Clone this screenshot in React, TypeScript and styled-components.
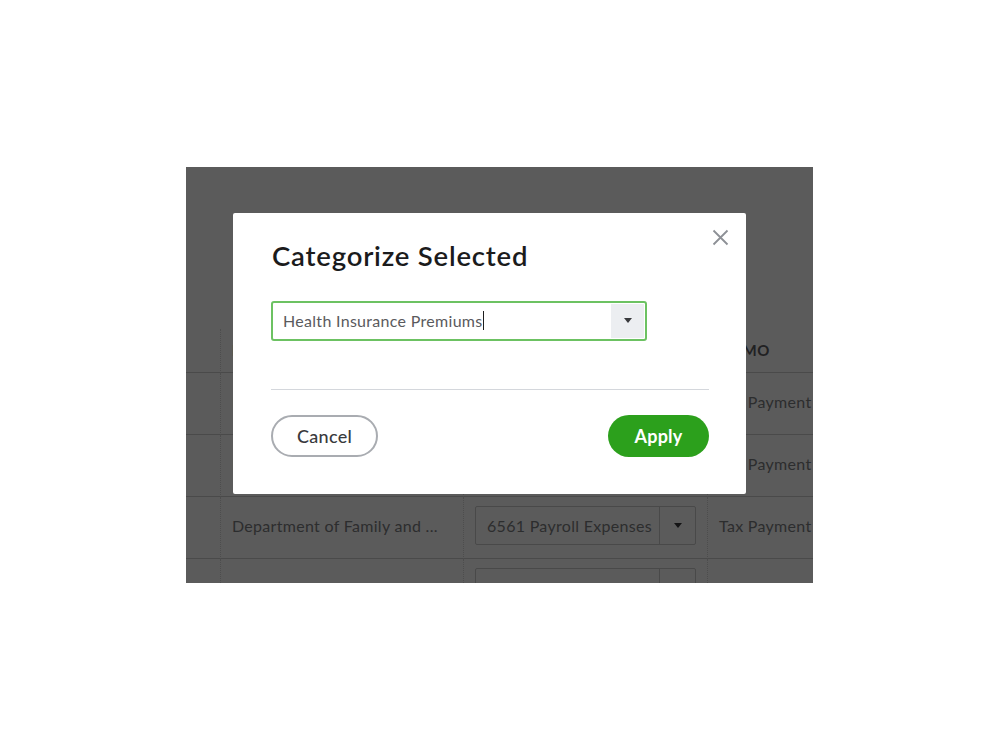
import React from "react";
import styled, { createGlobalStyle } from "styled-components";

const GlobalStyle = createGlobalStyle`
  html, body {
    margin: 0;
    padding: 0;
    background: #ffffff;
  }
  body {
    font-family: Lato, "Open Sans", Arial, sans-serif;
    color: #393a3d;
  }
  * {
    box-sizing: border-box;
  }
`;

const Page = styled.div`
  width: 100vw;
  height: 100vh;
  display: flex;
  align-items: center;
  justify-content: center;
`;

const Shot = styled.div`
  position: relative;
  width: 627px;
  height: 416px;
  overflow: hidden;
  background: #ffffff;
`;

const Table = styled.div`
  padding-top: 162px;
  display: grid;
  grid-template-columns: 35px 243px 244px 1fr;
`;

const HeadCell = styled.div<{ $first?: boolean }>`
  height: 44px;
  display: flex;
  align-items: center;
  padding: 0 11px;
  font-size: 15px;
  font-weight: 700;
  letter-spacing: 0.4px;
  color: #5e5e62;
  text-transform: uppercase;
  border-right: ${(p) => (p.$first ? "1px dotted #d9d9d9" : "none")};
  border-bottom: 1px solid #cfcfcf;
`;

const Cell = styled.div<{ $divider?: boolean }>`
  height: 62px;
  display: flex;
  align-items: center;
  padding: 0 11px 3px;
  font-size: 16px;
  letter-spacing: 0.3px;
  color: #7d7e82;
  white-space: nowrap;
  border-right: ${(p) => (p.$divider ? "1px dotted #d9d9d9" : "none")};
  border-bottom: 1px solid #cfcfcf;
`;

const RowSelect = styled.div`
  width: 222px;
  height: 39px;
  display: flex;
  border: 1px solid #cccccc;
  border-radius: 2px;
  background: #ffffff;
`;

const RowSelectText = styled.div`
  flex: 1;
  padding-left: 11px;
  display: flex;
  align-items: center;
  white-space: nowrap;
  font-size: 16px;
  letter-spacing: 0.3px;
  color: #7d7e82;
`;

const RowSelectArrow = styled.div`
  width: 36px;
  border-left: 1px solid #cccccc;
  display: flex;
  align-items: center;
  justify-content: center;
`;

const Triangle = styled.span`
  width: 0;
  height: 0;
  border-left: 4.5px solid transparent;
  border-right: 4.5px solid transparent;
  border-top: 5px solid #393a3d;
`;

const Overlay = styled.div`
  position: absolute;
  inset: 0;
  background: rgba(0, 0, 0, 0.643);
  display: flex;
  align-items: flex-start;
  padding: 46px 0 0 47px;
`;

const Modal = styled.div`
  width: 513px;
  height: 281px;
  background: #ffffff;
  border-radius: 2px;
  padding: 26px 37px 37px 38px;
  display: flex;
  flex-direction: column;
`;

const TitleRow = styled.div`
  display: flex;
  justify-content: space-between;
  align-items: flex-start;
`;

const Title = styled.h2`
  margin: 0 0 0 1px;
  font-size: 27.5px;
  line-height: 34px;
  letter-spacing: 0.8px;
  font-weight: 600;
  color: #1b1b1c;
`;

const CloseButton = styled.button`
  width: 18px;
  height: 18px;
  margin: -10px -20px 0 0;
  padding: 0;
  border: none;
  background: none;
  display: flex;
  align-items: center;
  justify-content: center;
  cursor: pointer;
`;

const Combo = styled.div`
  margin-top: 28px;
  width: 376px;
  height: 40px;
  display: flex;
  border: 2px solid #6cc262;
  border-radius: 3px;
  background: #ffffff;
`;

const ComboText = styled.div`
  flex: 1;
  display: flex;
  align-items: center;
  padding-left: 10px;
  font-size: 16px;
  letter-spacing: 0.3px;
  color: #5a5a5d;
  white-space: nowrap;
`;

const Caret = styled.span`
  display: inline-block;
  width: 1px;
  height: 19px;
  background: #1e1e1e;
`;

const ComboArrow = styled.div`
  width: 33px;
  margin: 1px;
  background: #eceef1;
  display: flex;
  align-items: center;
  justify-content: center;
`;

const Divider = styled.hr`
  margin: 48px 0 0;
  border: none;
  height: 1px;
  background: #d4d7dc;
`;

const Footer = styled.div`
  margin-top: 25px;
  display: flex;
  justify-content: space-between;
`;

const Pill = styled.button<{ $primary?: boolean }>`
  height: 42px;
  width: ${(p) => (p.$primary ? "101px" : "107px")};
  padding: 0;
  border-radius: 21px;
  font-family: inherit;
  font-size: 18px;
  letter-spacing: ${(p) => (p.$primary ? "0.2px" : "0.3px")};
  font-weight: ${(p) => (p.$primary ? 700 : 500)};
  color: ${(p) => (p.$primary ? "#ffffff" : "#393a3d")};
  background: ${(p) => (p.$primary ? "#2ca01c" : "#ffffff")};
  border: ${(p) => (p.$primary ? "none" : "2px solid #a9acb1")};
  cursor: pointer;
`;

type Row = { payee: string; category: string; memo: string };

const rows: Row[] = [
  { payee: "Internal Revenue Service", category: "6561 Payroll Expenses", memo: "Tax Payment" },
  { payee: "Internal Revenue Service", category: "6561 Payroll Expenses", memo: "Tax Payment" },
  { payee: "Department of Family and ...", category: "6561 Payroll Expenses", memo: "Tax Payment" },
  { payee: "01-550 Employment", category: "6561 Payroll Expenses", memo: "Tax Payment" },
];

const BackgroundTable = () => (
  <Table>
    <HeadCell $first />
    <HeadCell $first>Payee</HeadCell>
    <HeadCell $first>Category</HeadCell>
    <HeadCell>Memo</HeadCell>
    {rows.map((r, i) => (
      <React.Fragment key={i}>
        <Cell $divider />
        <Cell $divider>{r.payee}</Cell>
        <Cell $divider>
          <RowSelect>
            <RowSelectText>{r.category}</RowSelectText>
            <RowSelectArrow>
              <Triangle />
            </RowSelectArrow>
          </RowSelect>
        </Cell>
        <Cell>{r.memo}</Cell>
      </React.Fragment>
    ))}
  </Table>
);

export default function App() {
  return (
    <>
      <GlobalStyle />
      <Page>
        <Shot>
          <BackgroundTable />
          <Overlay>
            <Modal>
              <TitleRow>
                <Title>Categorize Selected</Title>
                <CloseButton aria-label="Close">
                  <svg width="17" height="17" viewBox="0 0 17 17">
                    <path d="M1.5 1.5 L15.5 15.5 M15.5 1.5 L1.5 15.5" stroke="#8d9096" strokeWidth="1.8" fill="none" />
                  </svg>
                </CloseButton>
              </TitleRow>
              <Combo>
                <ComboText>
                  Health Insurance Premiums
                  <Caret />
                </ComboText>
                <ComboArrow>
                  <Triangle />
                </ComboArrow>
              </Combo>
              <Divider />
              <Footer>
                <Pill>Cancel</Pill>
                <Pill $primary>Apply</Pill>
              </Footer>
            </Modal>
          </Overlay>
        </Shot>
      </Page>
    </>
  );
}
